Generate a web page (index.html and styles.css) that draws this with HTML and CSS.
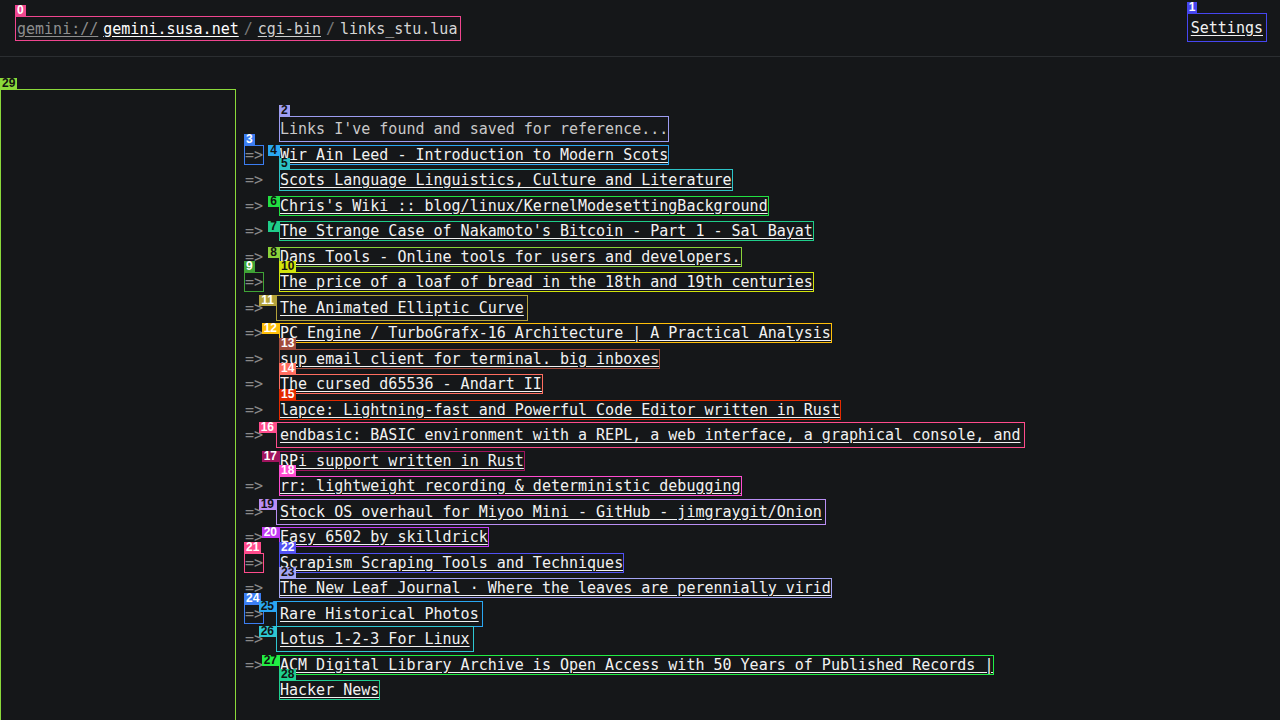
FILE: index.html
```html
<!DOCTYPE html>
<html lang="en">
<head>
<meta charset="utf-8">
<title>links_stu.lua</title>
<link rel="stylesheet" href="styles.css">
</head>
<body>
<header class="top">
  <nav class="crumbs mk c0">
    <b class="tag">0</b>
    <a class="scheme" href="#">gemini://</a>
    <a class="host" href="#">gemini.susa.net</a>
    <span class="sep">/</span>
    <a class="dir" href="#">cgi-bin</a>
    <span class="sep">/</span>
    <span class="file">links_stu.lua</span>
  </nav>
  <a class="settings mk c1" href="#"><b class="tag">1</b>Settings</a>
</header>
<div class="page">
  <aside class="toc mk c29"><b class="tag">29</b></aside>
  <main class="doc">
    <div class="row"><span class="arrow"></span><span class="intro mk c2 tall"><b class="tag">2</b>Links I've found and saved for reference...</span></div>
    <div class="row"><span class="arrow"><span class="mk c3"><b class="tag">3</b>=&gt;</span></span><a class="mk c4" href="#"><b class="tag left">4</b>Wir Ain Leed - Introduction to Modern Scots</a></div>
    <div class="row"><span class="arrow">=&gt;</span><a class="mk c5 mid" href="#"><b class="tag">5</b>Scots Language Linguistics, Culture and Literature</a></div>
    <div class="row"><span class="arrow">=&gt;</span><a class="mk c6" href="#"><b class="tag left">6</b>Chris's Wiki :: blog/linux/KernelModesettingBackground</a></div>
    <div class="row"><span class="arrow">=&gt;</span><a class="mk c7" href="#"><b class="tag left">7</b>The Strange Case of Nakamoto's Bitcoin - Part 1 - Sal Bayat</a></div>
    <div class="row"><span class="arrow">=&gt;</span><a class="mk c8" href="#"><b class="tag left">8</b>Dans Tools - Online tools for users and developers.</a></div>
    <div class="row"><span class="arrow"><span class="mk c9"><b class="tag">9</b>=&gt;</span></span><a class="mk c10" href="#"><b class="tag">10</b>The price of a loaf of bread in the 18th and 19th centuries</a></div>
    <div class="row"><span class="arrow">=&gt;</span><a class="mk c11 wide" href="#"><b class="tag left">11</b>The Animated Elliptic Curve</a></div>
    <div class="row"><span class="arrow">=&gt;</span><a class="mk c12" href="#"><b class="tag left">12</b>PC Engine / TurboGrafx-16 Architecture | A Practical Analysis</a></div>
    <div class="row"><span class="arrow">=&gt;</span><a class="mk c13" href="#"><b class="tag">13</b>sup email client for terminal. big inboxes</a></div>
    <div class="row"><span class="arrow">=&gt;</span><a class="mk c14" href="#"><b class="tag">14</b>The cursed d65536 - Andart II</a></div>
    <div class="row"><span class="arrow">=&gt;</span><a class="mk c15" href="#"><b class="tag">15</b>lapce: Lightning-fast and Powerful Code Editor written in Rust</a></div>
    <div class="row"><span class="arrow">=&gt;</span><a class="mk c16 wide" href="#"><b class="tag left">16</b>endbasic: BASIC environment with a REPL, a web interface, a graphical console, and</a></div>
    <div class="row"><span class="arrow"></span><a class="mk c17" href="#"><b class="tag left">17</b>RPi support written in Rust</a></div>
    <div class="row"><span class="arrow">=&gt;</span><a class="mk c18" href="#"><b class="tag">18</b>rr: lightweight recording &amp; deterministic debugging</a></div>
    <div class="row"><span class="arrow">=&gt;</span><a class="mk c19 wide" href="#"><b class="tag left">19</b>Stock OS overhaul for Miyoo Mini - GitHub - jimgraygit/Onion</a></div>
    <div class="row"><span class="arrow">=&gt;</span><a class="mk c20" href="#"><b class="tag left">20</b>Easy 6502 by skilldrick</a></div>
    <div class="row"><span class="arrow"><span class="mk c21"><b class="tag">21</b>=&gt;</span></span><a class="mk c22" href="#"><b class="tag">22</b>Scrapism Scraping Tools and Techniques</a></div>
    <div class="row"><span class="arrow">=&gt;</span><a class="mk c23" href="#"><b class="tag">23</b>The New Leaf Journal · Where the leaves are perennially virid</a></div>
    <div class="row"><span class="arrow"><span class="mk c24"><b class="tag">24</b>=&gt;</span></span><a class="mk c25 wide" href="#"><b class="tag left">25</b>Rare Historical Photos</a></div>
    <div class="row"><span class="arrow">=&gt;</span><a class="mk c26 wide" href="#"><b class="tag left">26</b>Lotus 1-2-3 For Linux</a></div>
    <div class="row"><span class="arrow">=&gt;</span><a class="mk c27" href="#"><b class="tag left">27</b>ACM Digital Library Archive is Open Access with 50 Years of Published Records |</a></div>
    <div class="row"><span class="arrow"></span><a class="mk c28" href="#"><b class="tag">28</b>Hacker News</a></div>
  </main>
</div>
</body>
</html>
```
FILE: styles.css
```css
html, body {
  margin: 0;
  padding: 0;
  background: #151719;
  height: 100%;
  overflow: hidden;
}

body {
  font-family: "DejaVu Sans Mono", "Liberation Mono", monospace;
  font-size: 15px;
  color: #e9e9e9;
}

a {
  color: #f2f2f2;
  text-decoration: underline;
  text-underline-offset: 2px;
}

/* ---------- header ---------- */
.top {
  height: 56px;
  border-bottom: 1px solid #2b2e31;
  display: flex;
  align-items: center;
  justify-content: space-between;
  padding: 0 14px 0 16px;
}

.crumbs {
  display: flex;
  align-items: center;
  gap: 5px;
  height: 23px;
  padding: 0 3px 0 1px;
  margin-top: 1px;
}

.crumbs .scheme { color: #8e8e8e; }
.crumbs .host { color: #ffffff; }
.crumbs .dir { color: #cfcfcf; }
.crumbs .sep { color: #7a7a7a; }
.crumbs .file { color: #d6d6d6; }

.settings {
  display: flex;
  align-items: center;
  height: 27px;
  padding: 0 3px;
  margin-top: -1px;
  color: #f2f2f2;
}

/* ---------- page ---------- */
.page {
  display: flex;
  gap: 9px;
  padding-top: 32px;
  height: calc(100vh - 57px);
  box-sizing: border-box;
  overflow: hidden;
}

.toc {
  width: 236px;
  flex: none;
  height: 700px;
  outline-offset: -1px;
}

.doc {
  padding-top: 28px;
}

.row {
  height: 25.5px;
  line-height: 25.5px;
  white-space: nowrap;
}

.arrow {
  display: inline-block;
  width: 35px;
  color: #8a8a8a;
}

.intro {
  color: #c9c9c9;
}

/* ---------- element marks ---------- */
.mk {
  position: relative;
  outline: 1px solid var(--c);
}

.mk.tall {
  padding: 3px 0;
}

.mk.mid {
  padding: 1px 0;
}

.mk.wide {
  padding: 3px;
  margin-left: -3px;
}

.tag {
  position: absolute;
  left: -1px;
  bottom: calc(100% + 1px);
  background: var(--c);
  color: var(--t, #ffffff);
  font-family: "Liberation Sans", Arial, sans-serif;
  font-weight: bold;
  font-size: 12px;
  line-height: 11px;
  padding: 0 2px;
  text-decoration: none;
  display: inline-block;
}

.tag.left {
  bottom: auto;
  left: auto;
  top: -1px;
  right: calc(100% + 1px);
}

.toc .tag {
  left: 0;
  bottom: 100%;
}

.c0 { --c: #f0468f; }
.c1 { --c: #4646ef; }
.c2 { --c: #9d9df2; --t: #111111; }
.c3 { --c: #3b7df2; }
.c4 { --c: #2aa7f2; --t: #111111; }
.c5 { --c: #2cc3c6; --t: #111111; }
.c6 { --c: #22e042; --t: #111111; }
.c7 { --c: #1fcd8a; --t: #111111; }
.c8 { --c: #8ad23a; --t: #111111; }
.c9 { --c: #3fa336; }
.c10 { --c: #d2e40c; --t: #111111; }
.c11 { --c: #b3a23a; }
.c12 { --c: #ffbf0a; }
.c13 { --c: #a24b3c; }
.c14 { --c: #ff6e60; }
.c15 { --c: #e42a00; }
.c16 { --c: #ff4c8c; }
.c17 { --c: #a0145e; }
.c18 { --c: #ff4cd0; }
.c19 { --c: #b98ef4; --t: #111111; }
.c20 { --c: #c23af4; }
.c21 { --c: #ff4c8c; }
.c22 { --c: #5151f4; }
.c23 { --c: #a5a5f4; --t: #111111; }
.c24 { --c: #3b7df2; }
.c25 { --c: #2aa7f2; --t: #111111; }
.c26 { --c: #2ec7d2; --t: #111111; }
.c27 { --c: #22ee44; --t: #111111; }
.c28 { --c: #1fcf8f; --t: #111111; }
.c29 { --c: #8ad93a; --t: #111111; }
```
